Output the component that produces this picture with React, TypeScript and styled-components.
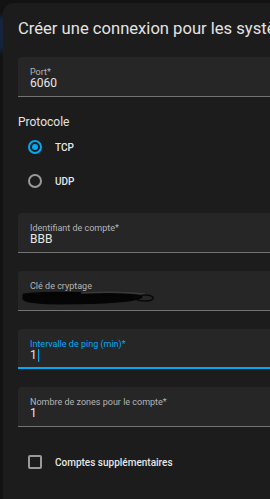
import styled, { createGlobalStyle } from 'styled-components'

const GlobalStyle = createGlobalStyle`
  html, body {
    margin: 0;
    padding: 0;
    overflow: hidden;
    background: linear-gradient(
      to bottom,
      #121212 12px,
      #15243c 20px,
      #15243c 46px,
      #121212 56px
    );
    font-family: Roboto, "Liberation Sans", sans-serif;
  }
`

const Dialog = styled.section`
  margin: 3px 0 0 3px;
  width: 420px;
  height: 496px;
  background: #1c1c1c;
  border-top-left-radius: 10px;
  padding: 16px 0 0 15px;
  box-sizing: border-box;
  color: #e1e1e1;
`

const Title = styled.h1`
  margin: 0 0 18px;
  font-size: 16.6px;
  line-height: 20px;
  font-weight: 400;
  white-space: nowrap;
  color: #e3e3e3;
`

const Field = styled.div<{ $focused?: boolean }>`
  position: relative;
  display: flex;
  flex-direction: column;
  box-sizing: border-box;
  width: 380px;
  height: 40px;
  padding: 11px 12px 0;
  margin-bottom: 18px;
  background: #262626;
  border-top-left-radius: 4px;
  border-bottom: ${(p) => (p.$focused ? '2px solid #03a9f4' : '1px solid #737373')};
`

const Label = styled.span<{ $focused?: boolean }>`
  font-size: 9px;
  line-height: 9px;
  color: ${(p) => (p.$focused ? '#03a9f4' : '#b4b4b4')};
`

const Value = styled.span`
  font-size: 12px;
  line-height: 13px;
  color: #e6e6e6;
  display: flex;
  align-items: center;
`

const Caret = styled.i`
  display: inline-block;
  width: 1px;
  height: 13px;
  margin-left: 1px;
  background: #03a9f4;
`

const Scribble = styled.svg`
  position: absolute;
  left: 3px;
  top: 18px;
`

const SectionTitle = styled.h2`
  margin: 0;
  font-size: 12px;
  line-height: 14px;
  font-weight: 400;
  color: #e3e3e3;
`

const OptionList = styled.div`
  display: flex;
  flex-direction: column;
  gap: 20px;
  padding: 11px 0 0 10px;
  margin-bottom: 25px;
`

const Option = styled.label`
  display: flex;
  align-items: center;
  gap: 13px;
  height: 14px;
  font-size: 10px;
  font-weight: 500;
  color: #e6e6e6;
`

const Radio = styled.span<{ $checked?: boolean }>`
  width: 14px;
  height: 14px;
  box-sizing: border-box;
  border-radius: 50%;
  border: 2px solid ${(p) => (p.$checked ? '#03a9f4' : '#9a9a9a')};
  display: flex;
  align-items: center;
  justify-content: center;
  &::after {
    content: '';
    width: 6px;
    height: 6px;
    border-radius: 50%;
    background: ${(p) => (p.$checked ? '#03a9f4' : 'transparent')};
  }
`

const CheckRow = styled(Option)`
  padding: 10px 0 0 10px;
`

const Checkbox = styled.span`
  width: 14px;
  height: 14px;
  box-sizing: border-box;
  border: 2px solid #9a9a9a;
  border-radius: 2px;
`

export default function App() {
  return (
    <>
      <GlobalStyle />
      <Dialog>
        <Title>Créer une connexion pour les systèmes d'alarme</Title>

        <Field>
          <Label>Port*</Label>
          <Value>6060</Value>
        </Field>

        <SectionTitle>Protocole</SectionTitle>
        <OptionList>
          <Option>
            <Radio $checked />
            TCP
          </Option>
          <Option>
            <Radio />
            UDP
          </Option>
        </OptionList>

        <Field>
          <Label>Identifiant de compte*</Label>
          <Value>BBB</Value>
        </Field>

        <Field>
          <Label>Clé de cryptage</Label>
          <Value>&nbsp;</Value>
          <Scribble width="136" height="18" viewBox="0 0 136 18">
            <path
              d="M3 6 C20 3 50 4 80 5 C100 5 112 6 120 8 C112 12 80 14 40 14 C20 14 6 13 3 10 Z"
              fill="#050505"
              stroke="#050505"
              strokeWidth="3"
              strokeLinejoin="round"
            />
            <path
              d="M60 4 C80 3 105 3 124 5"
              fill="none"
              stroke="#3a3a3a"
              strokeWidth="1.5"
            />
            <path
              d="M112 9 C120 6 128 5 132 8 C134 12 124 13 116 11"
              fill="none"
              stroke="#0a0a0a"
              strokeWidth="1.5"
            />
          </Scribble>
        </Field>

        <Field $focused>
          <Label $focused>Intervalle de ping (min)*</Label>
          <Value>
            1<Caret />
          </Value>
        </Field>

        <Field>
          <Label>Nombre de zones pour le compte*</Label>
          <Value>1</Value>
        </Field>

        <CheckRow>
          <Checkbox />
          Comptes supplémentaires
        </CheckRow>
      </Dialog>
    </>
  )
}
